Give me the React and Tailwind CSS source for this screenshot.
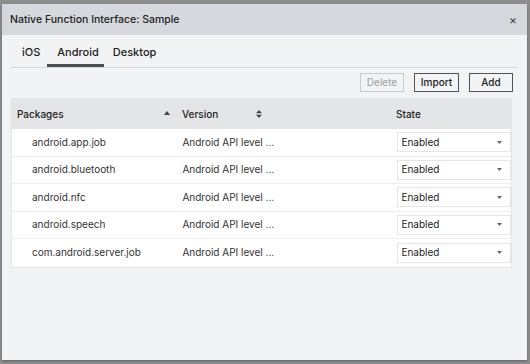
const rows = [
  'android.app.job',
  'android.bluetooth',
  'android.nfc',
  'android.speech',
  'com.android.server.job',
]

export default function App() {
  return (
    <div
      className="h-[364px] w-[530px] overflow-hidden bg-[#8c8c8c] pl-[2px] pr-[3px] pt-[4px] text-[#222]"
      style={{ fontFamily: 'Inter, "Noto Sans", sans-serif' }}
    >
      <div className="flex h-[356px] flex-col bg-[#f2f3f5] shadow-[0_1px_2px_rgba(0,0,0,0.3)]">
        {/* Header */}
        <div className="flex h-[31px] items-center justify-between bg-[#d5d8dc] pl-[8px] pr-[10px]">
          <span className="text-[10.5px] font-medium text-[#222]">Native Function Interface: Sample</span>
          <span className="text-[12px] leading-none text-[#444]">×</span>
        </div>

        <div className="px-[9px]">
          {/* Tabs */}
          <div className="flex h-[33px] items-end border-b border-[#d6d8db] px-[2px]">
            <div className="flex h-full items-center pl-[9px] pr-[7px] pt-[3px] text-[11px] font-medium">iOS</div>
            <div className="flex h-full items-center border-b-[3px] border-[#4a4f55] pl-[10px] pr-[5px] pt-[6px] text-[11px] font-medium">
              Android
            </div>
            <div className="flex h-full items-center px-[9px] pt-[3px] text-[11px] font-medium">Desktop</div>
          </div>

          {/* Actions */}
          <div className="flex justify-end gap-[10px] pr-[5px] pt-[5px]">
            <button className="h-[19px] w-[44px] border border-[#c8cbcf] bg-[#f2f3f5] text-[10px] text-[#9a9ea4]">
              Delete
            </button>
            <button className="h-[19px] w-[45px] border border-[#50555b] bg-[#f2f3f5] text-[10px] font-medium text-[#222]">
              Import
            </button>
            <button className="h-[19px] w-[44px] border border-[#50555b] bg-[#f2f3f5] text-[10px] font-medium text-[#222]">
              Add
            </button>
          </div>

          {/* Table */}
          <div className="mt-[6px] mr-[6px] border border-[#e3e5e8] bg-white">
            <div className="flex h-[30px] items-center bg-[#e4e5e7] text-[10px] font-medium">
              <div className="flex w-[164px] items-center justify-between pl-[5px] pr-[6px]">
                <span>Packages</span>
                <svg width="6" height="4" viewBox="0 0 6 4" className="mb-[3px] text-[#444]">
                  <path d="M0 4h6L3 0z" fill="currentColor" />
                </svg>
              </div>
              <div className="flex w-[88px] items-center justify-between pl-[6px] pr-[2px]">
                <span>Version</span>
                <svg width="6" height="8" viewBox="0 0 6 8" className="text-[#444]">
                  <path d="M0 3.3h6L3 0zM0 4.7h6L3 8z" fill="currentColor" />
                </svg>
              </div>
              <div className="flex-1 pl-[132px]">State</div>
            </div>
            {rows.map((r, i) => (
              <div
                key={r}
                className={`flex h-[27.5px] items-center text-[10px] ${i < rows.length - 1 ? 'border-b border-[#eceef0]' : ''}`}
              >
                <div className="w-[165px] pl-[20px] text-[#333]">{r}</div>
                <div className="w-[222px] pl-[6px] text-[#333]">Android API level ...</div>
                <div className="flex h-[20px] w-[114px] items-center justify-between border border-[#e3e5e8] bg-white pl-[3px] pr-[8px]">
                  <span className="text-[#222]">Enabled</span>
                  <svg width="5" height="3" viewBox="0 0 5 3">
                    <path d="M0 0h5L2.5 3z" fill="#666" />
                  </svg>
                </div>
              </div>
            ))}
          </div>
        </div>
      </div>
    </div>
  )
}
